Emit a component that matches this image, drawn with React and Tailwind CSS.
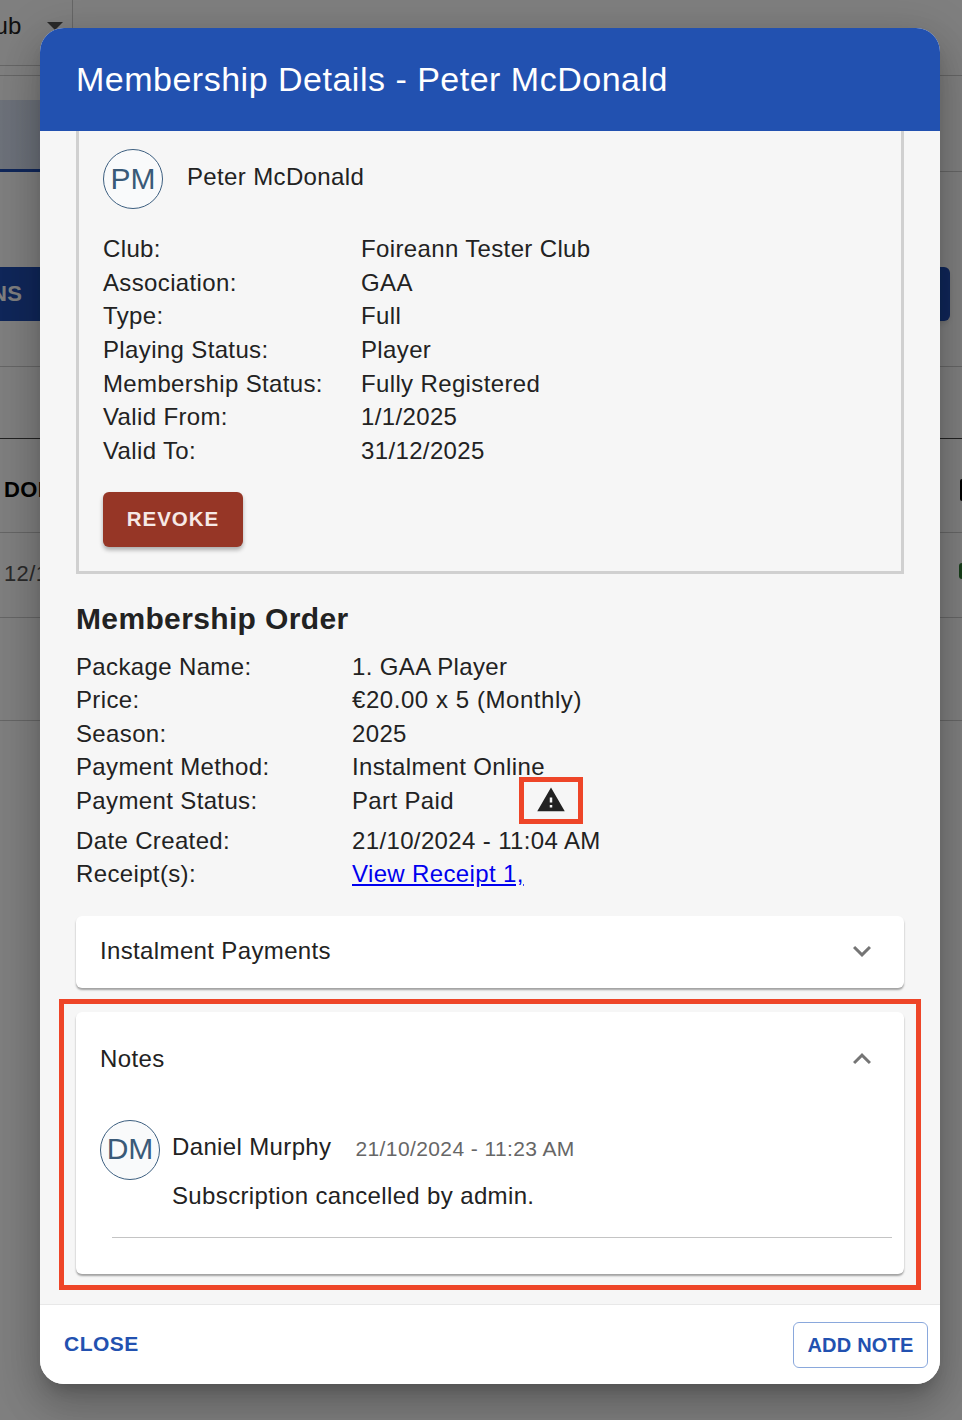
const memberRows = [
  ["Club:", "Foireann Tester Club"],
  ["Association:", "GAA"],
  ["Type:", "Full"],
  ["Playing Status:", "Player"],
  ["Membership Status:", "Fully Registered"],
  ["Valid From:", "1/1/2025"],
  ["Valid To:", "31/12/2025"],
];

const orderRows = [
  ["Package Name:", "1. GAA Player"],
  ["Price:", "€20.00 x 5 (Monthly)", "tracking-[0.56px]"],
  ["Season:", "2025"],
  ["Payment Method:", "Instalment Online"],
];

function Avatar({ initials }) {
  return (
    <div className="flex h-[60px] w-[60px] shrink-0 items-center justify-center rounded-full border border-[#3d5f80] bg-[#f9fafb] pb-[2px] text-[30px] tracking-normal text-[#3a5a78]">
      {initials}
    </div>
  );
}

function Chevron({ up }) {
  return (
    <svg viewBox="0 0 24 24" className="h-9 w-9 fill-[#757575]">
      {up ? (
        <path d="M12 8l-6 6 1.41 1.41L12 10.83l4.59 4.58L18 14z" />
      ) : (
        <path d="M16.59 8.59 12 13.17 7.41 8.59 6 10l6 6 6-6z" />
      )}
    </svg>
  );
}

function PageBehind() {
  return (
    <div className="h-[1420px] w-[962px] bg-white text-[24px] text-[#222]">
      <div className="h-[76px] border-b border-[#ccc]">
        <div className="flex h-[66px] w-[73px] items-center overflow-hidden border-r border-b border-[#ccc] pb-[14px]">
          <span className="-ml-[29px]">Club</span>
          <span className="ml-[25px] h-0 w-0 border-x-[8px] border-t-[8px] border-x-transparent border-t-[#555]"></span>
        </div>
      </div>
      <div className="mt-[24px] h-[72px] border-b border-[#ccc]">
        <div className="h-[72px] w-[400px] border-b-[3px] border-[#204eb4] bg-gradient-to-r from-[#dbe4f5] to-[#a8b8d8]"></div>
      </div>
      <div className="mt-[95px] flex h-[54px] justify-between">
        <div className="flex w-[60px] items-center overflow-hidden rounded-r bg-[#204eb4] pb-[2px] font-semibold text-white">
          <span className="-ml-[9px] text-[22px]">NS</span>
        </div>
        <div className="mr-[12px] w-[60px] rounded-md bg-[#204eb4] shadow-md"></div>
      </div>
      <div className="mt-[45px] h-[72px] border-t border-[#ccc]"></div>
      <div className="flex h-[95px] items-center justify-between border-y border-t-[#444] border-b-[#ccc] pt-[8px] text-[22px] font-bold text-black">
        <span className="ml-1">DOB</span>
        <span className="h-[22px] w-[2px] rounded-l-sm bg-black"></span>
      </div>
      <div className="flex h-[85px] items-center justify-between border-b border-[#ccc] pb-[4px] text-[#555]">
        <span className="ml-1 text-[22px]">12/1</span>
        <span className="mb-1 h-[16px] w-[3px] rounded-l-full bg-[#2e7d32]"></span>
      </div>
      <div className="h-[103px] border-b border-[#ccc]"></div>
    </div>
  );
}

export default function App() {
  return (
    <div className="relative h-[1420px] w-[962px] overflow-hidden tracking-[0.36px] [font-family:'Liberation_Sans',Arial,sans-serif]">
      <PageBehind />
      <div className="absolute inset-0 bg-black/50"></div>

      <div className="absolute top-[28px] left-[40px] flex h-[1356px] w-[900px] flex-col overflow-hidden rounded-[24px] bg-white shadow-[0_11px_15px_-7px_rgba(0,0,0,0.2),0_24px_38px_3px_rgba(0,0,0,0.14),0_9px_46px_8px_rgba(0,0,0,0.12)]">
        <div className="flex h-[103px] shrink-0 items-center bg-[#2251b0] pl-9 text-[34px] tracking-[0.5px] text-white">
          Membership Details - Peter McDonald
        </div>

        <div className="h-[1173px] shrink-0 overflow-hidden bg-[#f6f6f6] px-9 text-[24px] text-[#222]">
          <div className="h-[443px] border-x-[3px] border-b-[3px] border-[#d0d0d0] px-6 pt-[18px]">
            <div className="flex gap-6">
              <Avatar initials="PM" />
              <span className="mt-[10px] leading-9">Peter McDonald</span>
            </div>
            <div className="mt-[23.15px] grid grid-cols-[258px_1fr] leading-[33.6px]">
              {memberRows.map(([label, value]) => (
                <div key={label} className="contents">
                  <span>{label}</span>
                  <span>{value}</span>
                </div>
              ))}
            </div>
            <button className="mt-[25px] h-[55px] w-[140px] rounded-md bg-[#963626] text-[20.5px] font-bold tracking-[1px] text-[#f6e9e6] shadow-[0_3px_4px_rgba(0,0,0,0.3)]">
              REVOKE
            </button>
          </div>

          <h2 className="mt-[24px] text-[30px] leading-[42px] font-bold">Membership Order</h2>
          <div className="mt-[9.75px] grid grid-cols-[276px_1fr] leading-[33.5px]">
            {orderRows.map(([label, value, extra]) => (
              <div key={label} className="contents">
                <span>{label}</span>
                <span className={extra}>{value}</span>
              </div>
            ))}
            <span className="h-[40px]">Payment Status:</span>
            <div className="flex h-[40px] items-start">
              <span>Part Paid</span>
              <svg viewBox="0 0 24 24" className="mt-[1.5px] ml-[82px] h-[30px] w-[30px] fill-[#222]">
                <path d="M1 21h22L12 2 1 21zm12-3h-2v-2h2v2zm0-4h-2v-4h2v4z" />
              </svg>
            </div>
            <span>Date Created:</span>
            <span>21/10/2024 - 11:04 AM</span>
            <span>Receipt(s):</span>
            <span className="text-[#0000ee] underline">View Receipt 1,</span>
          </div>

          <div className="mt-[25px] flex h-[72px] items-center justify-between rounded-md bg-white pr-6 pb-[2px] pl-6 shadow-[0_2px_2px_rgba(0,0,0,0.35)]">
            <span>Instalment Payments</span>
            <Chevron />
          </div>

          <div className="mt-6 h-[262px] rounded-md bg-white px-6 shadow-[0_2px_2px_rgba(0,0,0,0.35)]">
            <div className="flex h-[94px] items-center justify-between">
              <span>Notes</span>
              <Chevron up />
            </div>
            <div className="mt-[14px] flex gap-3">
              <Avatar initials="DM" />
              <div>
                <div className="mt-[9px] flex h-9 items-center gap-6 leading-9">
                  <span>Daniel Murphy</span>
                  <span className="mt-1 text-[21px] tracking-[0.4px] text-[#666]">21/10/2024 - 11:23 AM</span>
                </div>
                <div className="mt-[13px] leading-9">Subscription cancelled by admin.</div>
              </div>
            </div>
            <div className="mt-[23px] ml-3 h-px w-[780px] bg-[#c4c4c4]"></div>
          </div>
        </div>

        <div className="flex h-[80px] shrink-0 items-center justify-between border-t border-[#e8e8e8] bg-white pr-3 pl-6 font-bold tracking-[0.5px] text-[#2251b0]">
          <button className="pb-[2px] text-[21px]">CLOSE</button>
          <button className="h-[46px] w-[135px] rounded-md border border-[#8aa8dc] text-[20px] tracking-[0.2px]">ADD NOTE</button>
        </div>
      </div>

      {/* red annotation boxes drawn on top of the screenshot */}
      <div className="absolute top-[777px] left-[519px] h-[47px] w-[64px] border-[5px] border-[#ee4528]"></div>
      <div className="absolute top-[999px] left-[59px] h-[291px] w-[862px] border-[5px] border-[#ee4528]"></div>
    </div>
  );
}
